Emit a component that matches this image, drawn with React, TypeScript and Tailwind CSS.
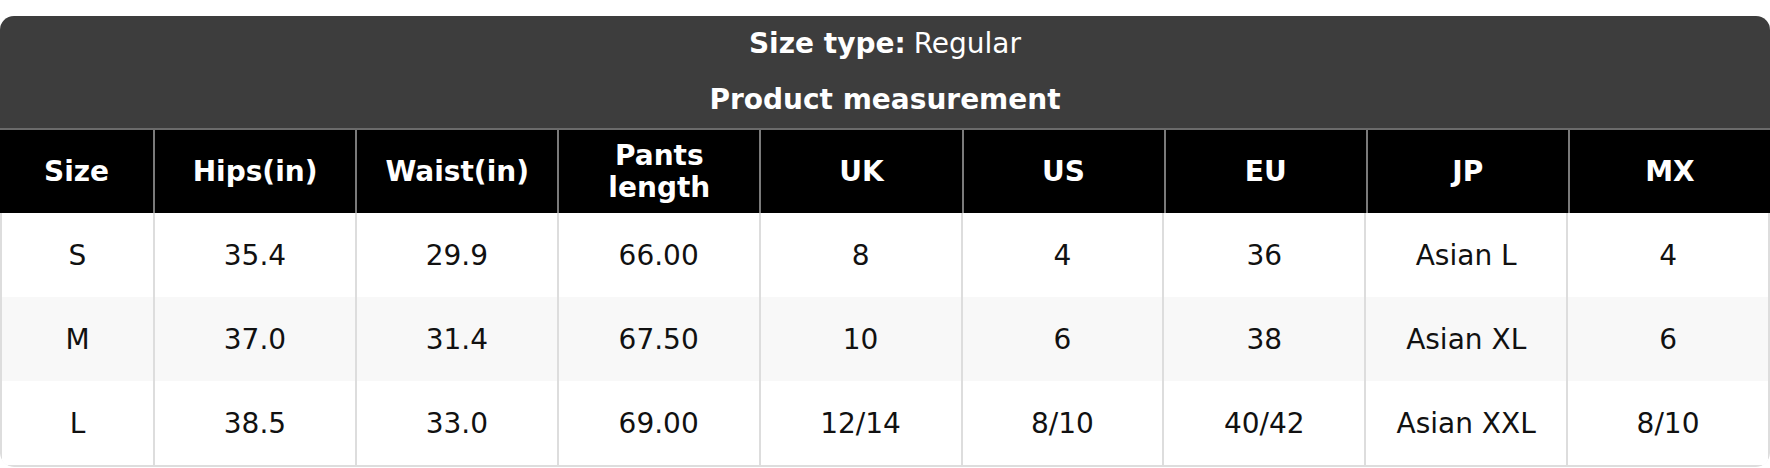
const columns = ['Size', 'Hips(in)', 'Waist(in)', 'Pants length', 'UK', 'US', 'EU', 'JP', 'MX'];

const rows = [
  ['S', '35.4', '29.9', '66.00', '8', '4', '36', 'Asian L', '4'],
  ['M', '37.0', '31.4', '67.50', '10', '6', '38', 'Asian XL', '6'],
  ['L', '38.5', '33.0', '69.00', '12/14', '8/10', '40/42', 'Asian XXL', '8/10'],
];

export default function App() {
  return (
    <div className="bg-white pt-4 text-[28px]" style={{ fontFamily: '"DejaVu Sans", Verdana, sans-serif' }}>
      <div className="overflow-hidden rounded-[14px]">
        <div className="bg-[#3d3d3d] text-white">
          <div className="flex h-[56px] items-center justify-center">
            <span className="font-bold">Size type:</span>
            <span className="ml-2">Regular</span>
          </div>
          <div className="flex h-[56px] items-center justify-center font-bold">Product measurement</div>
        </div>

        <div className="grid grid-cols-[153px_repeat(8,1fr)] border-t-2 border-[#6b6b6b] bg-black font-bold text-white">
          {columns.map((col, i) => (
            <div
              key={col}
              className={`flex h-[83px] items-center justify-center px-2 text-center leading-[32px] ${i > 0 ? 'border-l-2 border-[#7a7a7a]' : ''}`}
            >
              {col === 'Pants length' ? (
                <span>
                  Pants
                  <br />
                  length
                </span>
              ) : (
                col
              )}
            </div>
          ))}
        </div>

        <div className="rounded-b-[14px] border-x-2 border-b-2 border-[#dddddd] text-[#111]">
          {rows.map((row, r) => (
            <div
              key={row[0]}
              className={`grid grid-cols-[151px_repeat(8,1fr)] ${r === 1 ? 'bg-[#f8f8f8]' : 'bg-white'}`}
            >
              {row.map((cell, i) => (
                <div
                  key={i}
                  className={`flex h-[84px] items-center justify-center pt-[2px] ${i > 0 ? 'border-l-2 border-[#dddddd]' : ''}`}
                >
                  {cell}
                </div>
              ))}
            </div>
          ))}
        </div>
      </div>
    </div>
  );
}
